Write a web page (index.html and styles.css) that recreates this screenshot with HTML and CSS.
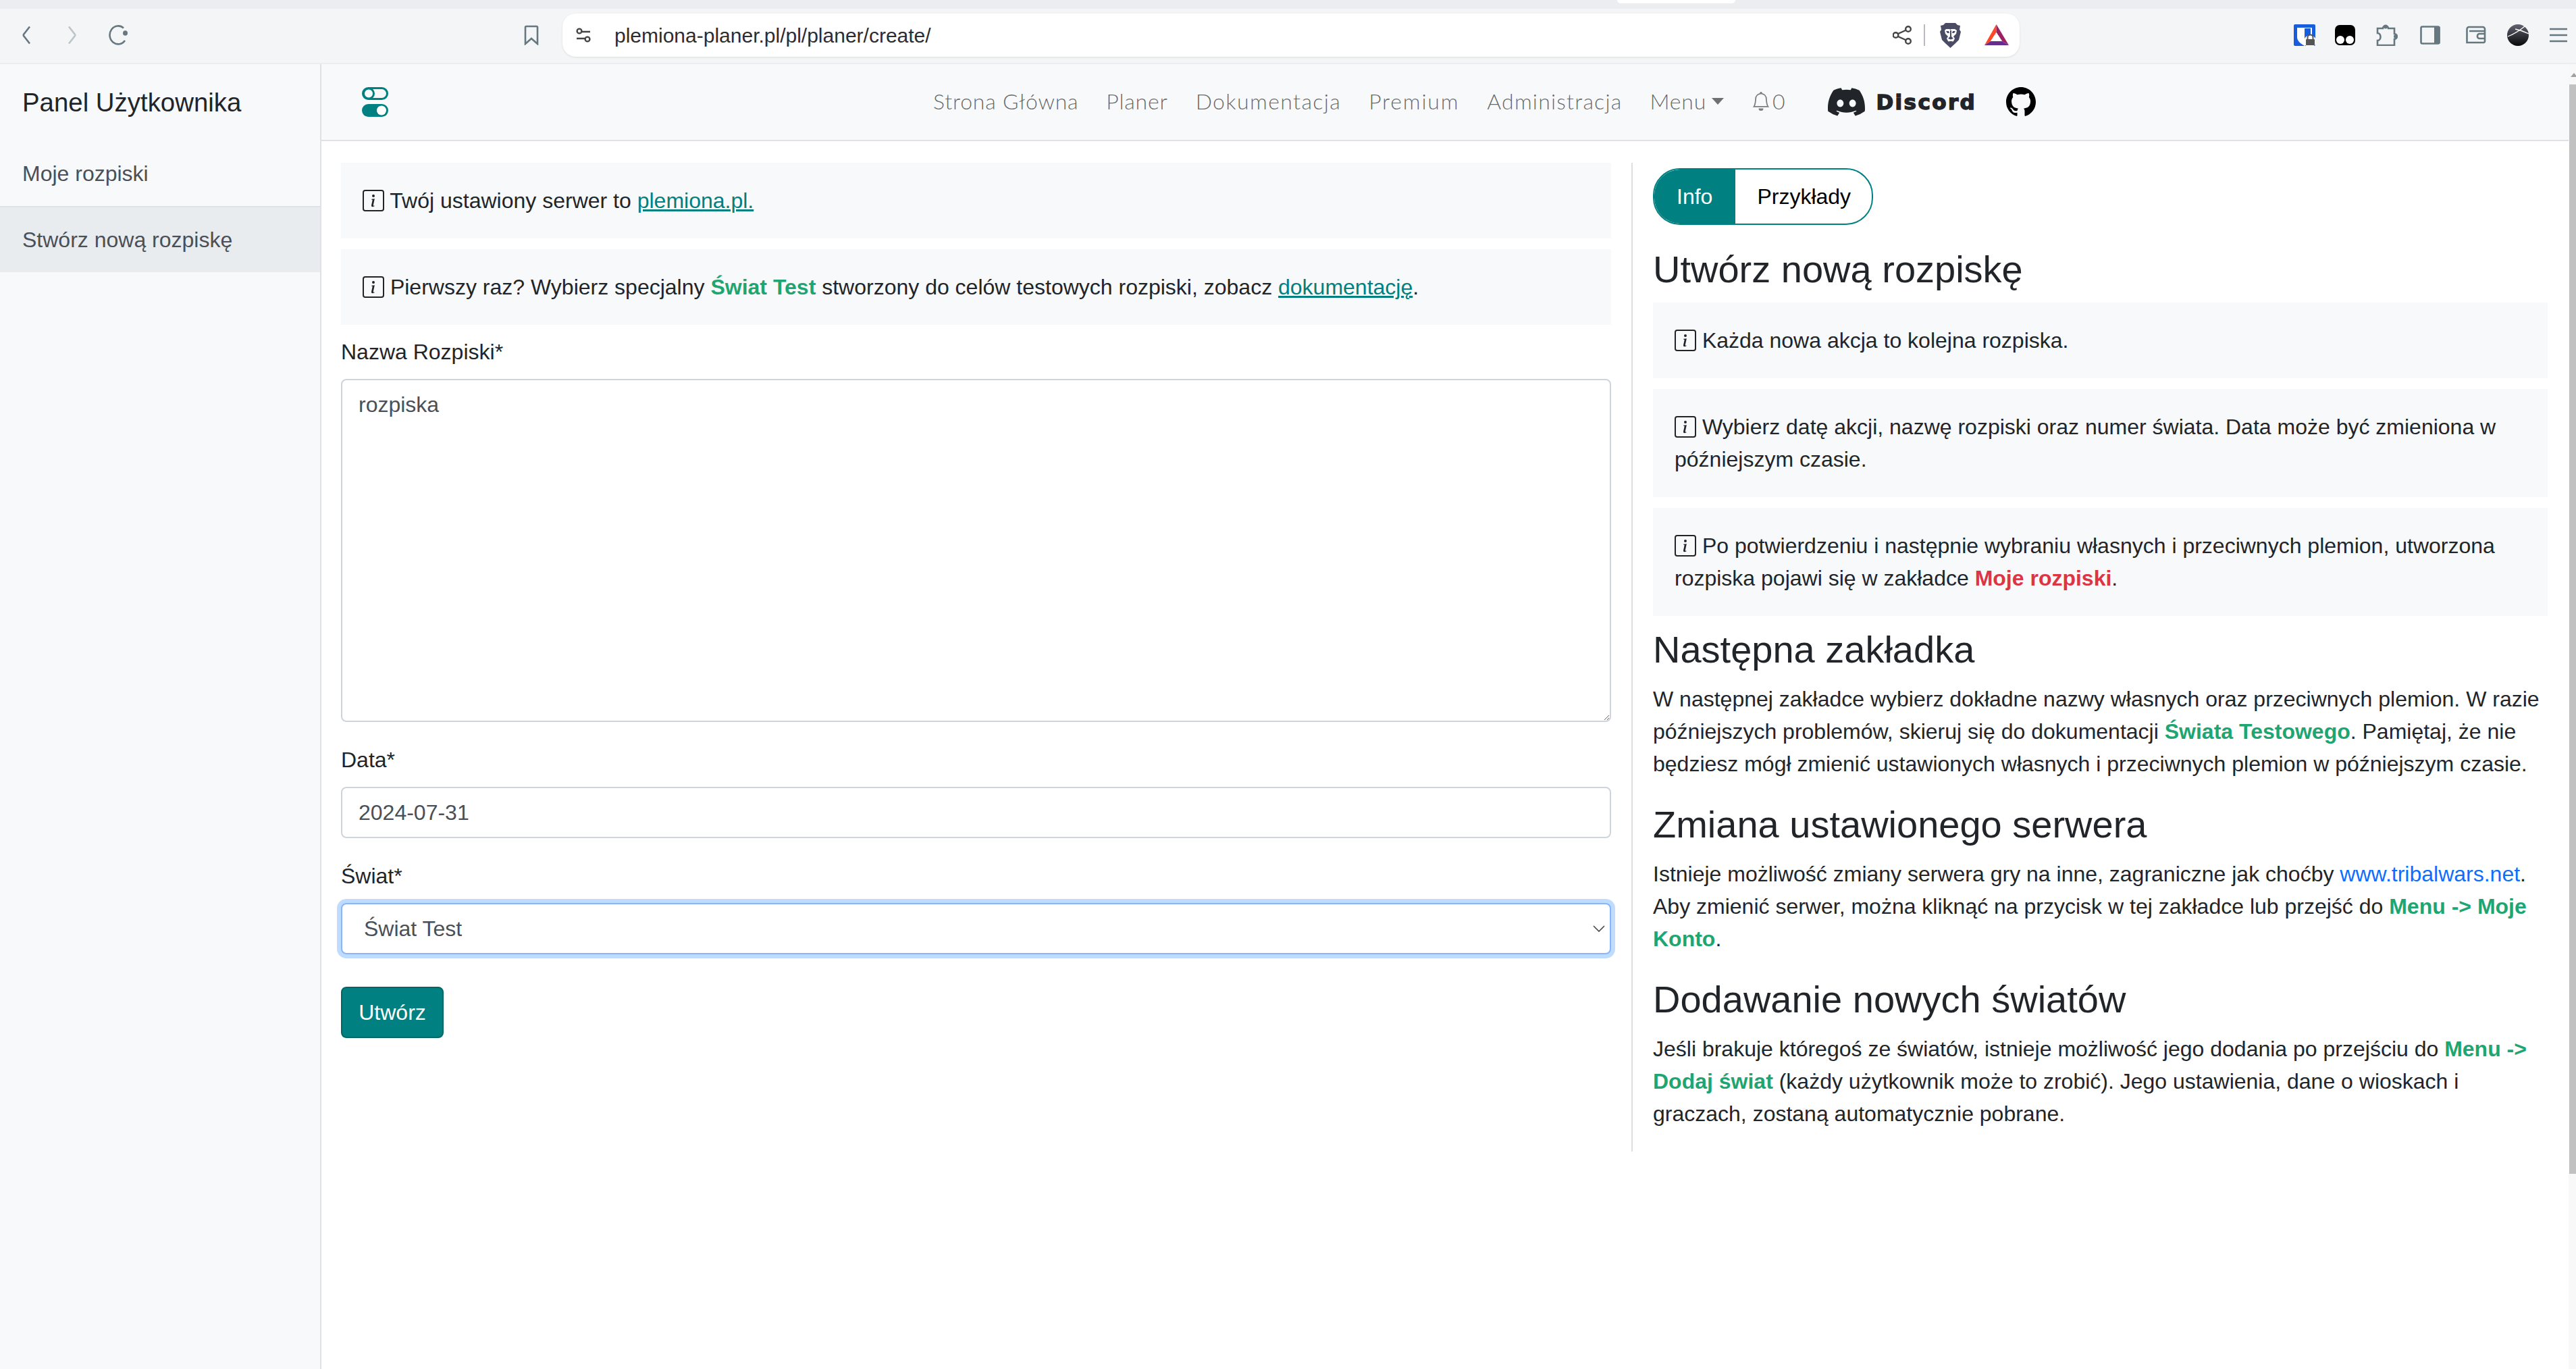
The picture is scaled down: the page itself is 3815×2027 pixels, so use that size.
FILE: index.html
```html
<!DOCTYPE html>
<html lang="pl">
<head>
    <meta charset="UTF-8">
    <title>Stwórz nową rozpiskę</title>
    <link rel="stylesheet" href="styles.css">
</head>
<body>
    <div class="tab-strip"><div class="tab-edge"></div></div>

    <header class="toolbar">
        <svg class="ic ic-back" viewBox="0 0 14 28"><path d="M12 1.5 3 13a2 2 0 0 0 0 2l9 11.5"/></svg>
        <svg class="ic ic-forward" viewBox="0 0 14 28"><path d="M2 1.5 11 13a2 2 0 0 1 0 2L2 26.5"/></svg>
        <svg class="ic ic-reload" viewBox="0 0 30 30"><path d="M23 4.500A12.500 13.500 0 1 0 25 23"/><ellipse class="solid" cx="25.500" cy="12" rx="3.500" ry="3.800"/></svg>
        <svg class="ic ic-bookmark" viewBox="0 0 22 30"><path d="M2 28V3.500A1.500 1.500 0 0 1 3.500 2h15A1.500 1.500 0 0 1 20 3.500V28l-9-8z"/></svg>

        <div class="urlbar">
            <svg class="ic-dark ic-site" viewBox="0 0 22 22"><circle cx="5" cy="5" r="3.400"/><path d="M9 6h12M1 16h12"/><circle cx="17" cy="17" r="3.400"/></svg>
            <span class="url-text">plemiona-planer.pl/pl/planer/create/</span>
            <svg class="ic-dark ic-share" viewBox="0 0 28 28"><circle cx="23" cy="5" r="3.800"/><circle cx="23" cy="23" r="3.800"/><circle cx="4.500" cy="14" r="3.800"/><path d="m8 12 12-5.500M8 16l12 5.500"/></svg>
            <span class="url-sep"></span>
            <svg class="ic-lion" viewBox="0 0 31 37">
                <path fill="#4a4c63" d="M8 0h15l3 3 4 1-1 6 2 3-3 12-6 6-6.500 6-6.500-6-6-6-3-12 2-3-1-6 4-1z"/>
                <path fill="#fff" d="M9 9h5l1.500 1 1.500-1h5l3 2-1 5-4 4 2 3-2 4-4 2-4-2-2-4 2-3-4-4-1-5z"/>
                <path fill="#4a4c63" d="M9 12h4l1 3-3 0zM18 15l1-3h4l-2 3zM15 11h2v9l3 3-4 1.500-4-1.500 3-3zM13 27h6l-3 3z"/>
            </svg>
            <svg class="ic-bat" viewBox="0 0 36 32">
                <path fill="#ff4724" d="M17.500 0 0 31l9-6 8.500-13z"/>
                <path fill="#9e1f63" d="M17.500 0 36 31l-10-6-8.500-13z"/>
                <path fill="#662d91" d="M0 31h36l-10-6H9z"/>
                <path fill="#fff" d="m17.500 12 8.500 13H9z"/>
            </svg>
        </div>

        <svg class="ic-bitwarden" viewBox="0 0 32 32">
            <rect width="32" height="32" rx="2" fill="#175ddc"/>
            <path fill="#fff" d="M5 5h22v14c0 6-6 10-11 13C11 29 5 25 5 19z"/>
            <path fill="#175ddc" d="M16 6h9v13c0 4-5 8-9 10z"/>
            <circle cx="24" cy="25" r="9" fill="#fff"/>
            <rect x="18" y="22" width="13" height="9" rx="1" fill="#555"/>
            <path d="M20.500 22v-2.500a4 4 0 0 1 8 0V22" fill="none" stroke="#555" stroke-width="2"/>
        </svg>
        <svg class="ic-monkey" viewBox="0 0 30 30"><rect width="30" height="30" rx="7"/><circle cx="8" cy="22" r="6" fill="#fff"/><circle cx="22" cy="22" r="6" fill="#fff"/></svg>
        <svg class="ic ic-puzzle" viewBox="0 0 32 32"><path d="M2 6h8c0-5 8-5 8 0h9v8c5 0 5 8 0 8v9H2v-7c6 0 6-11 0-11z"/><circle class="solid" cx="14" cy="3.500" r="3"/><circle class="solid" cx="29" cy="18" r="3"/></svg>
        <svg class="ic ic-panel" viewBox="0 0 30 28"><rect x="1.500" y="1.500" width="27" height="25" rx="2"/><path class="solid" d="M21 1h7a1.500 1.500 0 0 1 1.500 1.500v23A1.500 1.500 0 0 1 28 27h-7z"/></svg>
        <svg class="ic ic-wallet" viewBox="0 0 30 28"><path d="M28 8V5a3 3 0 0 0-3-3H4.500A3 3 0 0 0 1.500 5v20h25a2 2 0 0 0 1.500-2V8H5"/><path d="M28 12h-8a3 3 0 0 0-3 3v1a3 3 0 0 0 3 3h8"/></svg>
        <svg class="ic-avatar" viewBox="0 0 32 32">
            <defs><linearGradient id="avatarFill" x1="0" y1="0" x2="0" y2="1"><stop offset="0" stop-color="#62646f"/><stop offset="1" stop-color="#08080b"/></linearGradient></defs>
            <circle cx="16" cy="16" r="16" fill="url(#avatarFill)"/>
            <path d="M1 18 Q14 13 26 3M12 7q10 2 20 7" fill="none" stroke="#fff" stroke-width="1.300"/>
        </svg>
        <svg class="ic ic-menu" viewBox="0 0 26 22"><path d="M0 2h26M0 11h26M0 20h26"/></svg>
    </header>

    <div class="page">
        <aside class="sidebar">
            <div class="sidebar-heading">Panel Użytkownika</div>
            <a class="sidebar-item" href="#">Moje rozpiski</a>
            <a class="sidebar-item active" href="#">Stwórz nową rozpiskę</a>
        </aside>

        <div class="content-wrap">
            <nav class="navbar">
                <svg class="logo" viewBox="0 0 39 44">
                    <rect x="1.500" y="1.500" width="36" height="16" rx="8" fill="none" stroke="#008080" stroke-width="3"/>
                    <circle cx="10" cy="9.500" r="7.500" fill="none" stroke="#008080" stroke-width="3"/>
                    <rect y="25" width="39" height="19" rx="9.500" fill="#008080"/>
                    <circle cx="29" cy="34.500" r="7" fill="#fff"/>
                </svg>
                <div class="nav-links">
                    <a href="#">Strona Główna</a>
                    <a href="#">Planer</a>
                    <a href="#" class="link-docs">Dokumentacja</a>
                    <a href="#" class="link-premium">Premium</a>
                    <a href="#" class="link-admin">Administracja</a>
                    <a href="#" class="dropdown">Menu<span class="caret"></span></a>
                    <a href="#" class="bell">
                        <svg class="bell-icon" viewBox="0 0 16 16"><path d="M8 16a2 2 0 0 0 2-2H6a2 2 0 0 0 2 2zM8 1.918l-.797.161A4.002 4.002 0 0 0 4 6c0 .628-.134 2.197-.459 3.742-.16.767-.376 1.566-.663 2.258h10.244c-.287-.692-.502-1.49-.663-2.258C12.134 8.197 12 6.628 12 6a4.002 4.002 0 0 0-3.203-3.92L8 1.917zM14.220 12c.223.447.481.801.78 1H1c.299-.199.557-.553.78-1C2.680 10.200 3 6.880 3 6c0-2.420 1.720-4.440 4.005-4.901a1 1 0 1 1 1.990 0A5.002 5.002 0 0 1 13 6c0 .880.320 4.200 1.220 6z"/></svg>0
                    </a>
                </div>
                <a href="#" class="discord">
                    <svg class="discord-icon" viewBox="0 1.800 16 12.400" preserveAspectRatio="none"><path d="M13.545 2.907a13.227 13.227 0 0 0-3.257-1.011.05.05 0 0 0-.052.025c-.141.25-.297.577-.406.833a12.19 12.19 0 0 0-3.658 0 8.258 8.258 0 0 0-.412-.833.051.051 0 0 0-.052-.025c-1.125.194-2.22.534-3.257 1.011a.041.041 0 0 0-.021.018C.356 6.024-.213 9.047.066 12.032c.001.014.01.028.021.037a13.276 13.276 0 0 0 3.995 2.02.05.05 0 0 0 .056-.019c.308-.42.582-.863.818-1.329a.05.05 0 0 0-.01-.059.051.051 0 0 0-.018-.011 8.875 8.875 0 0 1-1.248-.595.05.05 0 0 1-.02-.066.051.051 0 0 1 .015-.019c.084-.063.168-.129.248-.195a.05.05 0 0 1 .051-.007c2.619 1.196 5.454 1.196 8.041 0a.052.052 0 0 1 .053.007c.08.066.164.132.248.195a.051.051 0 0 1-.004.085 8.254 8.254 0 0 1-1.249.594.05.05 0 0 0-.03.03.052.052 0 0 0 .003.041c.24.465.515.909.817 1.329a.05.05 0 0 0 .056.019 13.235 13.235 0 0 0 4.001-2.02.049.049 0 0 0 .021-.037c.334-3.451-.559-6.449-2.366-9.106a.034.034 0 0 0-.02-.019Zm-8.198 7.307c-.789 0-1.438-.724-1.438-1.612 0-.889.637-1.613 1.438-1.613.807 0 1.45.73 1.438 1.613 0 .888-.637 1.612-1.438 1.612Zm5.316 0c-.788 0-1.438-.724-1.438-1.612 0-.889.637-1.613 1.438-1.613.807 0 1.451.73 1.438 1.613 0 .888-.631 1.612-1.438 1.612Z"/></svg>
                    <span class="discord-name">Discord</span>
                </a>
                <a href="#" class="github">
                    <svg viewBox="0 0 16 16"><path d="M8 0C3.58 0 0 3.58 0 8c0 3.54 2.29 6.53 5.47 7.59.4.07.55-.17.55-.38 0-.19-.01-.82-.01-1.49-2.01.37-2.53-.49-2.69-.94-.09-.23-.48-.94-.82-1.13-.28-.15-.68-.52-.01-.53.63-.01 1.08.58 1.23.82.72 1.21 1.87.87 2.33.66.07-.52.28-.87.51-1.07-1.78-.2-3.64-.89-3.64-3.95 0-.87.31-1.59.82-2.15-.08-.2-.36-1.02.08-2.12 0 0 .67-.21 2.2.82.64-.18 1.32-.27 2-.27.68 0 1.36.09 2 .27 1.53-1.04 2.2-.82 2.2-.82.44 1.1.16 1.92.08 2.12.51.56.82 1.27.82 2.15 0 3.07-1.87 3.75-3.65 3.95.29.25.54.73.54 1.48 0 1.07-.01 1.93-.01 2.2 0 .21.15.46.55.38A8.013 8.013 0 0 0 16 8c0-4.42-3.58-8-8-8z"/></svg>
                </a>
            </nav>

            <main class="content">
                <section class="col-form">
                    <div class="note">
                        <svg class="info" viewBox="0 0 16 16"><use href="#infoSquare"/></svg> Twój ustawiony serwer to <a class="teal-link" href="#">plemiona.pl.</a>
                    </div>
                    <div class="note">
                        <svg class="info" viewBox="0 0 16 16"><use href="#infoSquare"/></svg> Pierwszy raz? Wybierz specjalny <b class="green">Świat Test</b> stworzony do celów testowych rozpiski, zobacz <a class="teal-link" href="#">dokumentację</a>.
                    </div>

                    <form>
                        <div class="field">
                            <label for="name">Nazwa Rozpiski*</label>
                            <textarea id="name" class="control area">rozpiska</textarea>
                        </div>
                        <div class="field">
                            <label for="date">Data*</label>
                            <input id="date" class="control" type="text" value="2024-07-31">
                        </div>
                        <div class="field">
                            <label for="world">Świat*</label>
                            <select id="world" class="control picker">
                                <option>Świat Test</option>
                            </select>
                        </div>
                        <button type="button" class="btn-create">Utwórz</button>
                    </form>
                </section>

                <section class="col-info">
                    <div class="switch">
                        <span class="switch-btn on">Info</span>
                        <span class="switch-btn">Przykłady</span>
                    </div>

                    <h3>Utwórz nową rozpiskę</h3>
                    <div class="note">
                        <svg class="info" viewBox="0 0 16 16"><use href="#infoSquare"/></svg> Każda nowa akcja to kolejna rozpiska.
                    </div>
                    <div class="note">
                        <svg class="info" viewBox="0 0 16 16"><use href="#infoSquare"/></svg> Wybierz datę akcji, nazwę rozpiski oraz numer świata. Data może być zmieniona w późniejszym czasie.
                    </div>
                    <div class="note">
                        <svg class="info" viewBox="0 0 16 16"><use href="#infoSquare"/></svg> Po potwierdzeniu i następnie wybraniu własnych i przeciwnych plemion, utworzona rozpiska pojawi się w zakładce <b class="red">Moje rozpiski</b>.
                    </div>

                    <h3>Następna zakładka</h3>
                    <p>W następnej zakładce wybierz dokładne nazwy własnych oraz przeciwnych plemion. W razie późniejszych problemów, skieruj się do dokumentacji <b class="green">Świata Testowego</b>. Pamiętaj, że nie będziesz mógł zmienić ustawionych własnych i przeciwnych plemion w późniejszym czasie.</p>

                    <h3>Zmiana ustawionego serwera</h3>
                    <p>Istnieje możliwość zmiany serwera gry na inne, zagraniczne jak choćby <a class="blue-link" href="#">www.tribalwars.net</a>. Aby zmienić serwer, można kliknąć na przycisk w tej zakładce lub przejść do <b class="green">Menu -&gt; Moje Konto</b>.</p>

                    <h3>Dodawanie nowych światów</h3>
                    <p>Jeśli brakuje któregoś ze światów, istnieje możliwość jego dodania po przejściu do <b class="green">Menu -&gt; Dodaj świat</b> (każdy użytkownik może to zrobić). Jego ustawienia, dane o wioskach i graczach, zostaną automatycznie pobrane.</p>
                </section>
            </main>
        </div>

        <div class="scrollbar">
            <span class="scroll-arrow"></span>
            <span class="scroll-thumb"></span>
        </div>
    </div>

    <svg class="defs" width="0" height="0">
        <symbol id="infoSquare" viewBox="0 0 16 16">
            <path d="M14 1a1 1 0 0 1 1 1v12a1 1 0 0 1-1 1H2a1 1 0 0 1-1-1V2a1 1 0 0 1 1-1h12zM2 0a2 2 0 0 0-2 2v12a2 2 0 0 0 2 2h12a2 2 0 0 0 2-2V2a2 2 0 0 0-2-2H2z"/>
            <path d="m8.93 6.588-2.29.287-.082.38.45.083c.294.07.352.176.288.469l-.738 3.468c-.194.897.105 1.319.808 1.319.545 0 1.178-.252 1.465-.598l.088-.416c-.2.176-.492.246-.686.246-.275 0-.375-.193-.304-.533L8.93 6.588zM9 4.5a1 1 0 1 1-2 0 1 1 0 0 1 2 0z"/>
        </symbol>
    </svg>
</body>
</html>
```

FILE: styles.css
```css
* {
    box-sizing: border-box;
}

body {
    margin: 0;
    height: 2027px;
    overflow: hidden;
    display: flex;
    flex-direction: column;
    font-family: "Liberation Sans", Arial, sans-serif;
    font-size: 32px;
    line-height: 48px;
    color: #212529;
    background: #fff;
}

a {
    text-decoration: none;
}

.defs {
    position: absolute;
}

/* browser chrome */
.tab-strip {
    height: 13px;
    background: #ecedf0;
}

.tab-edge {
    width: 175px;
    height: 5px;
    margin-left: 2395px;
    background: #fff;
    border-radius: 0 0 12px 12px;
}

.toolbar {
    display: flex;
    align-items: center;
    height: 82px;
    padding: 0 0 2px 32px;
    background: #f4f5f7;
    border-bottom: 2px solid #ebedf0;
}

.toolbar svg {
    flex: none;
}

.ic {
    fill: none;
    stroke: #66777f;
    stroke-width: 2.6;
}

.ic .solid {
    fill: #66777f;
    stroke: none;
}

.ic-dark {
    fill: none;
    stroke: #444;
    stroke-width: 2.4;
}

.ic-back {
    width: 14px;
    height: 28px;
}

.ic-forward {
    width: 14px;
    height: 28px;
    margin-left: 54px;
    stroke: #bcc4c8;
}

.ic-reload {
    width: 30px;
    height: 30px;
    margin-left: 46px;
}

.ic-bookmark {
    width: 22px;
    height: 30px;
    margin-left: 586px;
}

.urlbar {
    display: flex;
    align-items: center;
    flex: none;
    width: 2158px;
    height: 64px;
    margin-left: 35px;
    padding: 0 16px 0 20px;
    background: #fff;
    border-radius: 20px;
    box-shadow: 0 1px 3px rgba(0, 0, 0, 0.1);
}

.ic-site {
    width: 22px;
    height: 22px;
}

.url-text {
    flex: 1;
    margin: 2px 0 0 35px;
    font-size: 30px;
    color: #2b2d31;
}

.ic-share {
    width: 28px;
    height: 28px;
}

.url-sep {
    width: 2px;
    height: 32px;
    margin-left: 18px;
    background: #b8bcc0;
}

.ic-lion {
    width: 31px;
    height: 37px;
    margin-left: 22px;
}

.ic-bat {
    width: 36px;
    height: 32px;
    margin-left: 35px;
}

.ic-bitwarden {
    width: 32px;
    height: 32px;
    margin-left: 406px;
}

.ic-monkey {
    width: 30px;
    height: 30px;
    margin-left: 29px;
}

.ic-puzzle {
    width: 32px;
    height: 32px;
    margin-left: 31px;
}

.ic-panel {
    width: 30px;
    height: 28px;
    margin-left: 33px;
}

.ic-wallet {
    width: 30px;
    height: 28px;
    margin-left: 38px;
}

.ic-avatar {
    width: 32px;
    height: 32px;
    margin-left: 31px;
}

.ic-menu {
    width: 26px;
    height: 22px;
    margin-left: 31px;
}

/* page */
.page {
    flex: 1;
    display: flex;
    min-height: 0;
}

.sidebar {
    flex: none;
    width: 476px;
    background: #f8f9fa;
    border-right: 2px solid #dee2e6;
}

.sidebar-heading {
    padding: 28px 33px;
    font-size: 38.4px;
    line-height: 57.6px;
}

.sidebar-item {
    display: block;
    height: 98px;
    padding: 24px 33px;
    color: #495057;
    border-bottom: 2px solid #dee2e6;
}

.sidebar-item.active {
    height: 96px;
    background: #e9ecef;
    border-bottom: 0;
}

.content-wrap {
    flex: 1;
    min-width: 0;
}

.navbar {
    display: flex;
    align-items: center;
    height: 114px;
    padding-left: 60px;
    background: #f8f9fa;
    border-bottom: 2px solid #dee2e6;
}

.logo {
    width: 39px;
    height: 44px;
}

.nav-links {
    display: flex;
    align-items: center;
    gap: 41px;
    margin-left: 807px;
    padding-bottom: 2px;
    font-family: Lato, sans-serif;
    font-weight: 300;
    letter-spacing: 0.8px;
}

.nav-links a {
    color: rgba(0, 0, 0, 0.6);
}

.nav-links .link-docs {
    letter-spacing: 1.4px;
}

.nav-links .link-premium {
    letter-spacing: 1.8px;
}

.nav-links .link-admin {
    letter-spacing: 1.2px;
}

.dropdown {
    display: flex;
    align-items: center;
}

.caret {
    width: 0;
    height: 0;
    margin-left: 8px;
    border-top: 10px solid rgba(0, 0, 0, 0.55);
    border-left: 9px solid transparent;
    border-right: 9px solid transparent;
}

.bell {
    display: flex;
    align-items: center;
}

.bell-icon {
    width: 28px;
    height: 28px;
    margin-right: 3px;
    fill: #7c7c7c;
}

.discord {
    display: flex;
    align-items: center;
    margin-left: 63px;
    color: #212529;
}

.discord-icon {
    width: 55px;
    height: 42px;
    fill: #212529;
}

.discord-name {
    margin-left: 16px;
    font-family: "DejaVu Sans", sans-serif;
    font-weight: 700;
    font-size: 31px;
    letter-spacing: 2.4px;
    -webkit-text-stroke: 1.4px #212529;
}

.github {
    display: flex;
    margin-left: 44px;
}

.github svg {
    width: 44px;
    height: 44px;
}

.content {
    display: flex;
    align-items: flex-start;
    padding: 32px 31px 0 29px;
}

.col-form {
    flex: none;
    width: 1881px;
}

.col-info {
    flex: 1;
    margin-left: 30px;
    padding: 8px 0 0 30px;
    border-left: 2px solid #dcdee0;
}

.note {
    margin-bottom: 16px;
    padding: 32px;
    background: #f8f9fa;
}

.info {
    width: 32px;
    height: 32px;
    vertical-align: -5px;
    fill: #212529;
}

.teal-link {
    color: #008080;
    text-decoration: underline;
    text-decoration-thickness: 2.5px;
}

.blue-link {
    color: #0d6efd;
}

.green {
    color: #1ea672;
}

.red {
    color: #dc3545;
}

/* form */
.field {
    margin-bottom: 32px;
}

.field label {
    display: block;
    margin-bottom: 16px;
}

.control {
    display: block;
    width: 100%;
    height: 76px;
    padding: 12px 24px;
    font: inherit;
    color: #495057;
    background: #fff;
    border: 2px solid #ced4da;
    border-radius: 8px;
    outline: none;
}

.area {
    height: 508px;
}

.picker {
    appearance: none;
    padding-left: 32px;
    background-image: url("data:image/svg+xml,%3csvg xmlns='http://www.w3.org/2000/svg' viewBox='0 0 18 10'%3e%3cpath fill='none' stroke='%23444' stroke-width='1.6' d='M1 1l8 8 8-8'/%3e%3c/svg%3e");
    background-repeat: no-repeat;
    background-position: right 7px center;
    background-size: 18px 10px;
    border-color: #86b7fe;
    box-shadow: 0 0 0 6px #bfdcff;
}

.btn-create {
    display: block;
    width: 152px;
    height: 76px;
    margin-top: 48px;
    padding: 0;
    font: inherit;
    color: #fff;
    background: #008080;
    border: 2px solid #006666;
    border-radius: 8px;
}

/* right column */
.switch {
    display: inline-flex;
    vertical-align: top;
    overflow: hidden;
    background: #fff;
    border: 2px solid #008080;
    border-radius: 40px;
}

.switch-btn {
    padding: 16px 31px 16px 32px;
    color: #000;
}

.switch-btn.on {
    padding: 16px 34px 16px 33px;
    color: #fff;
    background: #008080;
}

h3 {
    margin: 32px 0 16px;
    font-size: 56px;
    font-weight: 400;
    line-height: 67px;
}

.note + h3 {
    margin-top: 16px;
}

p {
    margin: 0 0 32px;
}

p + h3 {
    margin-top: 0;
}

/* page scrollbar */
.scrollbar {
    position: relative;
    flex: none;
    width: 11px;
    background: #f8f8f8;
}

.scroll-arrow {
    position: absolute;
    top: 13px;
    right: -2px;
    border-bottom: 6px solid #a0a0a0;
    border-left: 5px solid transparent;
    border-right: 5px solid transparent;
}

.scroll-thumb {
    position: absolute;
    top: 30px;
    left: 1px;
    right: 0;
    height: 1613px;
    background: #c1c1c1;
}
```
